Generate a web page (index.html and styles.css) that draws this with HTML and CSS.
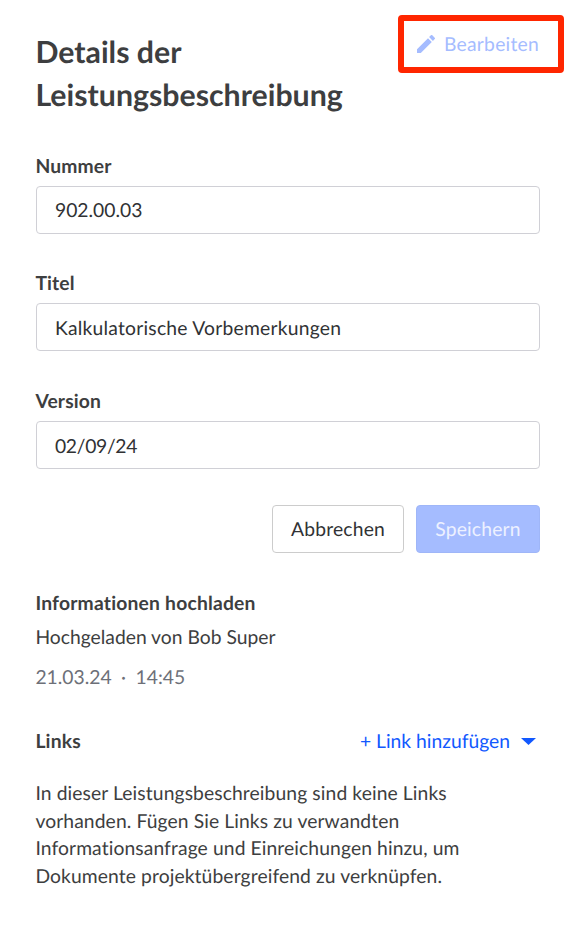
FILE: index.html
```
<!DOCTYPE html>
<html lang="de">
<head>
    <meta charset="UTF-8">
    <meta name="viewport" content="width=device-width, initial-scale=1.0">
    <title>Details der Leistungsbeschreibung</title>
    <link rel="stylesheet" href="styles.css">
</head>
<body>

<main class="panel">
    <header class="panel-header">
        <h1>Details der Leistungsbeschreibung</h1>
        <div class="highlight">
            <button class="edit-button" type="button" disabled>
                <svg class="edit-icon" viewBox="0 0 18 18" width="18" height="18">
                    <path d="M0 14.2V18h3.8L14.8 7 11 3.2zM17.7 4.1a1 1 0 0 0 0-1.4L15.3.3a1 1 0 0 0-1.4 0L12.1 2.1l3.8 3.8z" fill="currentColor"/>
                </svg>
                <span>Bearbeiten</span>
            </button>
        </div>
    </header>

    <form class="details-form">
        <div class="field">
            <label for="nummer">Nummer</label>
            <input id="nummer" type="text" value="902.00.03">
        </div>
        <div class="field">
            <label for="titel">Titel</label>
            <input class="input-title" id="titel" type="text" value="Kalkulatorische Vorbemerkungen">
        </div>
        <div class="field">
            <label for="version">Version</label>
            <input class="input-version" id="version" type="text" value="02/09/24">
        </div>
        <div class="actions">
            <button class="btn btn-cancel" type="button">Abbrechen</button>
            <button class="btn btn-save" type="button" disabled>Speichern</button>
        </div>
    </form>

    <section class="upload-info">
        <h2>Informationen hochladen</h2>
        <p>Hochgeladen von Bob Super</p>
        <p class="timestamp"><span>21.03.24</span><span class="dot">·</span><span>14:45</span></p>
    </section>

    <section class="links">
        <div class="links-header">
            <h2>Links</h2>
            <button class="add-link" type="button">+ Link hinzufügen
                <svg class="caret" viewBox="0 0 15 7" width="15" height="7">
                    <path d="M0 0h15L7.5 7z" fill="currentColor"/>
                </svg>
            </button>
        </div>
        <p class="links-empty">In dieser Leistungsbeschreibung sind keine Links vorhanden. Fügen Sie Links zu verwandten Informationsanfrage und Einreichungen hinzu, um Dokumente projektübergreifend zu verknüpfen.</p>
    </section>
</main>

</body>
</html>
```
FILE: styles.css
```
* {
    box-sizing: border-box;
}
body {
    margin: 0;
    background-color: #ffffff;
    color: #3d3e40;
    font-family: Lato, "Liberation Sans", sans-serif;
    font-size: 19.3px;
    line-height: 28px;
    font-variant-ligatures: none;
    text-rendering: geometricPrecision;
}
h1, h2, p {
    margin: 0;
}
button, input {
    font: inherit;
    font-variant-ligatures: none;
    text-rendering: inherit;
}
.panel {
    padding: 15px 38px 0 35.4px;
}
.panel-header {
    display: flex;
    justify-content: space-between;
    align-items: flex-start;
    height: 138px;
    margin-right: -24px;
}
h1 {
    width: 330px;
    padding-top: 16px;
    font-size: 30.3px;
    line-height: 43px;
}
h2 {
    font-size: 19.3px;
    line-height: 28px;
    letter-spacing: 0.2px;
}
.highlight {
    width: 166px;
    height: 58px;
    border: 6px solid #ff2600;
    border-radius: 4px;
}
.edit-button {
    display: flex;
    align-items: center;
    gap: 9px;
    height: 46px;
    padding: 0 0 0 13px;
    border: 0;
    background: none;
    color: #a5bcff;
    letter-spacing: 0.25px;
}
.edit-button span {
    padding-top: 2px;
}
.details-form {
    margin-left: 0.6px;
}
.field {
    height: 117.3px;
}
.field label {
    display: block;
    height: 33px;
    margin-left: -0.6px;
    font-weight: bold;
    line-height: 28px;
    letter-spacing: 0.15px;
}
.field input {
    display: block;
    width: 100%;
    height: 48px;
    padding: 0 18px;
    border: 1px solid #d0d0d6;
    border-radius: 4px;
    color: #303234;
}
.field .input-title {
    padding-top: 2px;
    letter-spacing: 0.23px;
}
.field .input-version {
    padding-top: 3px;
    letter-spacing: -0.3px;
}
.actions {
    display: flex;
    justify-content: flex-end;
    gap: 12px;
}
.btn {
    height: 48px;
    padding: 2px 0 0;
    border-radius: 4px;
    letter-spacing: 0.2px;
}
.btn-cancel {
    width: 132px;
    border: 1px solid #cccccc;
    background-color: #ffffff;
    color: #303234;
}
.btn-save {
    width: 124px;
    border: 1px solid #9fb6f8;
    background-color: #a5bcff;
    color: #edf1ff;
}
.upload-info {
    padding-top: 37px;
}
.upload-info p {
    margin-top: 6px;
}
.upload-info .timestamp {
    display: flex;
    margin-top: 12px;
    color: #6d7078;
}
.dot {
    margin: 0 9.5px;
}
.links {
    padding-top: 36px;
}
.links-header {
    display: flex;
    justify-content: space-between;
    align-items: center;
}
.add-link {
    display: flex;
    align-items: center;
    gap: 11px;
    padding: 0 4px 0 0;
    border: 0;
    background: none;
    color: #1158ff;
}
.links-empty {
    width: 450px;
    margin-top: 24px;
    line-height: 27.7px;
    letter-spacing: 0.1px;
}
```
